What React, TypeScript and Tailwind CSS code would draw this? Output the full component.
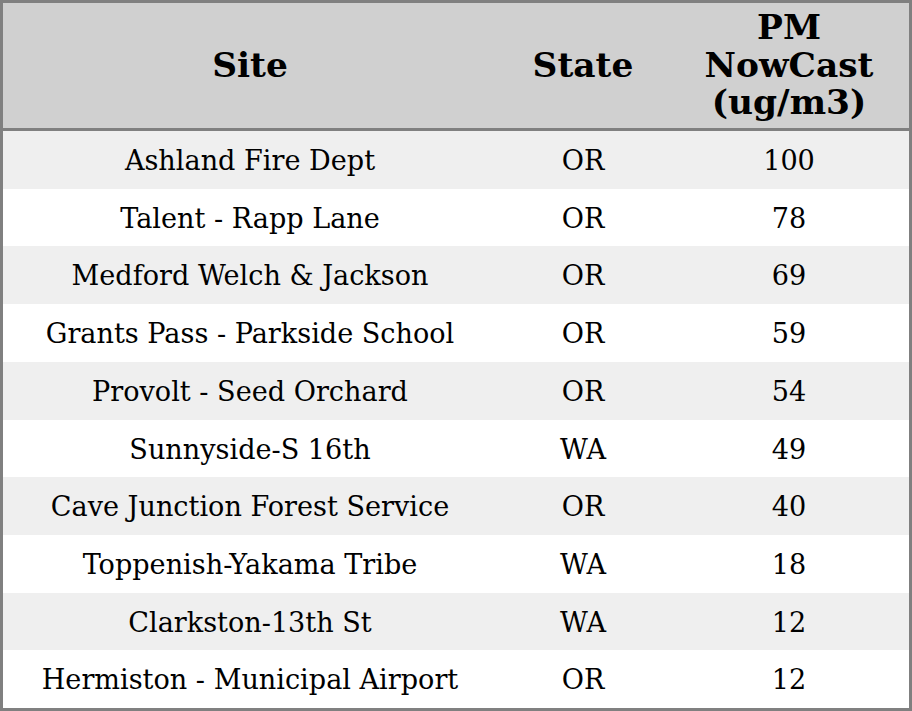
const rows: [string, string, number][] = [
  ["Ashland Fire Dept", "OR", 100],
  ["Talent - Rapp Lane", "OR", 78],
  ["Medford Welch & Jackson", "OR", 69],
  ["Grants Pass - Parkside School", "OR", 59],
  ["Provolt - Seed Orchard", "OR", 54],
  ["Sunnyside-S 16th", "WA", 49],
  ["Cave Junction Forest Service", "OR", 40],
  ["Toppenish-Yakama Tribe", "WA", 18],
  ["Clarkston-13th St", "WA", 12],
  ["Hermiston - Municipal Airport", "OR", 12],
];

export default function App() {
  return (
    <div className="w-[912px] h-[711px] bg-white font-['DejaVu_Serif',serif] text-black">
      <div className="w-[912px] h-[711px] border-[3px] border-[#808080] flex flex-col">
        {/* header */}
        <div className="grid grid-cols-[494px_172px_240px] h-[125px] bg-[#d0d0d0] font-bold text-[34.4px] leading-[37.5px] text-center items-center">
          <div>Site</div>
          <div>State</div>
          <div>
            PM
            <br />
            NowCast
            <br />
            (ug/m3)
          </div>
        </div>
        <div className="h-[3px] bg-[#808080]" />
        <div className="flex-1 flex flex-col text-[27.1px]">
          {rows.map(([site, state, val], i) => (
            <div
              key={i}
              className={`flex-1 grid grid-cols-[494px_172px_240px] items-center text-center pt-[3px] ${
                i % 2 === 0 ? "bg-[#efefef]" : "bg-white"
              }`}
            >
              <div>{site}</div>
              <div>{state}</div>
              <div>{val}</div>
            </div>
          ))}
        </div>
      </div>
    </div>
  );
}
